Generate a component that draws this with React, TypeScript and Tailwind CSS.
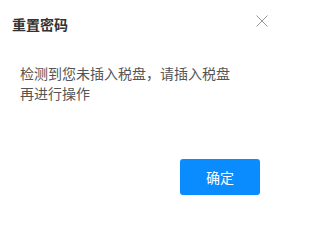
export default function App() {
  return (
    <div
      className="flex h-[218px] w-[280px] flex-col bg-white"
      style={{ fontFamily: '"Noto Sans CJK SC", "Liberation Sans", sans-serif' }}
    >
      <div className="flex items-start justify-between px-3 pt-[14px]">
        <span className="text-[14px] font-bold leading-5 text-[#333]">重置密码</span>
        <svg width="12" height="12" viewBox="0 0 12 12" className="mt-[1px] text-[#999]">
          <path d="M0.5 0.5L11.5 11.5M11.5 0.5L0.5 11.5" stroke="currentColor" strokeWidth="1" />
        </svg>
      </div>
      <div className="mt-[29px] px-5 text-[14px] leading-5 text-[#555]">
        <p>检测到您未插入税盘，请插入税盘</p>
        <p>再进行操作</p>
      </div>
      <div className="mt-[56px] flex justify-end pr-5">
        <button className="h-[36px] w-[80px] rounded-[3px] bg-[#0a8cff] text-[14px] text-white">
          确定
        </button>
      </div>
    </div>
  );
}
